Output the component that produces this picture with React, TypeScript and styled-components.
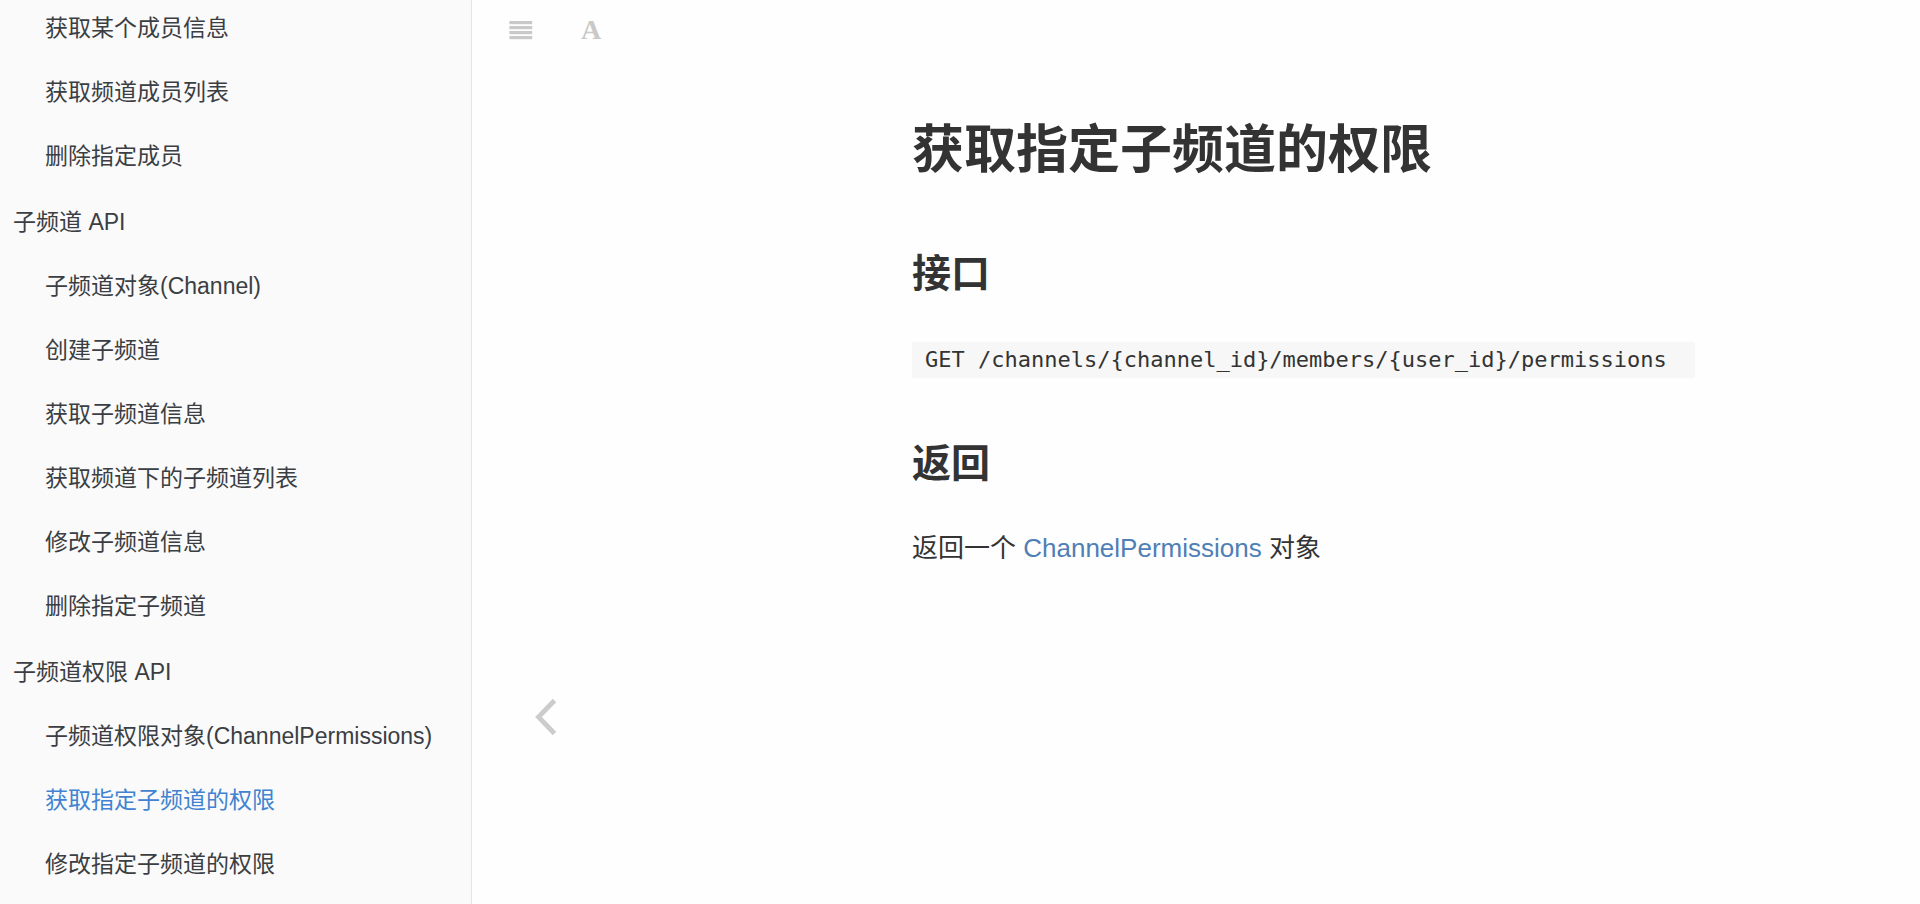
import React from "react";
import styled, { createGlobalStyle } from "styled-components";

const GlobalStyle = createGlobalStyle`
  * { box-sizing: border-box; }
  html, body { margin: 0; padding: 0; background: #fefefe; }
  body {
    font-family: "Liberation Sans", "Noto Sans CJK SC", sans-serif;
    color: #333;
  }
`;

const Book = styled.div`
  display: flex;
  height: 100vh;
  overflow: hidden;
`;

const Sidebar = styled.nav`
  flex: 0 0 472px;
  padding: 12px 13px 0;
  overflow: hidden;
  background: #fafafa;
  border-right: 1px solid #e4e4e4;
`;

const Group = styled.section`
  display: flex;
  flex-direction: column;
  gap: 32px;
  margin-bottom: 34px;
`;

const GroupTitle = styled.h3`
  margin: 0;
  font-size: 23px;
  font-weight: 400;
  line-height: 32px;
  color: #3b3e43;
`;

const Chapters = styled.ul`
  display: flex;
  flex-direction: column;
  gap: 32px;
  margin: 0;
  padding: 0 0 0 32px;
  list-style: none;
`;

const Chapter = styled.li`
  font-size: 23px;
  line-height: 32px;
  white-space: nowrap;
`;

const ChapterLink = styled.a<{ $active: boolean }>`
  display: block;
  text-decoration: none;
  color: ${(p) => (p.$active ? "#4183d0" : "#3b3e43")};
`;

const Main = styled.main`
  flex: 1;
  min-width: 0;
  display: flex;
  flex-direction: column;
  position: relative;
`;

const Toolbar = styled.header`
  display: flex;
  align-items: center;
  gap: 46px;
  height: 60px;
  padding: 0 37px;
`;

const ToolButton = styled.button`
  display: flex;
  align-items: center;
  justify-content: center;
  width: 24px;
  height: 32px;
  padding: 0;
  border: 0;
  background: none;
  color: #c9c9c9;
  font: bold 28px/32px "Liberation Serif", serif;
  cursor: pointer;
`;

const PrevLink = styled.a`
  position: absolute;
  left: 62px;
  top: 697px;
  display: flex;
  color: #ccc;
`;

const Article = styled.article`
  padding: 58px 24px 0 440px;
`;

const Title = styled.h1`
  margin: 0 0 68px;
  font-size: 52px;
  line-height: 64px;
  font-weight: 700;
`;

const Heading = styled.h2`
  margin: 0;
  font-size: 39px;
  line-height: 48px;
  font-weight: 700;
`;

const Endpoint = styled.p`
  display: flex;
  margin: 44px 0 62px;
`;

const Code = styled.code`
  padding: 0 28px 0 13px;
  background: #f7f7f7;
  font: 22px/36px "DejaVu Sans Mono", monospace;
  white-space: nowrap;
`;

const Paragraph = styled.p`
  margin: 40px 0 0;
  font-size: 26px;
  line-height: 40px;
`;

const TextLink = styled.a`
  color: #4f7fb5;
  text-decoration: none;
`;

const groups: { title?: string; items: string[] }[] = [
  { items: ["获取某个成员信息", "获取频道成员列表", "删除指定成员"] },
  {
    title: "子频道 API",
    items: [
      "子频道对象(Channel)",
      "创建子频道",
      "获取子频道信息",
      "获取频道下的子频道列表",
      "修改子频道信息",
      "删除指定子频道",
    ],
  },
  {
    title: "子频道权限 API",
    items: [
      "子频道权限对象(ChannelPermissions)",
      "获取指定子频道的权限",
      "修改指定子频道的权限",
    ],
  },
];

const current = "获取指定子频道的权限";

export default function App() {
  return (
    <>
      <GlobalStyle />
      <Book>
        <Sidebar>
          {groups.map((group, i) => (
            <Group key={i}>
              {group.title && <GroupTitle>{group.title}</GroupTitle>}
              <Chapters>
                {group.items.map((item) => (
                  <Chapter key={item}>
                    <ChapterLink href="#" $active={item === current}>
                      {item}
                    </ChapterLink>
                  </Chapter>
                ))}
              </Chapters>
            </Group>
          ))}
        </Sidebar>
        <Main>
          <Toolbar>
            <ToolButton aria-label="目录">
              <svg width="24" height="20" viewBox="0 0 24 20" fill="currentColor">
                <rect x="0.4" y="1" width="22.8" height="3.2" />
                <rect x="0.4" y="6" width="22.8" height="3.2" />
                <rect x="0.4" y="11" width="22.8" height="3.2" />
                <rect x="0.4" y="16" width="22.8" height="3.2" />
              </svg>
            </ToolButton>
            <ToolButton aria-label="字体设置">A</ToolButton>
          </Toolbar>
          <Article>
            <Title>获取指定子频道的权限</Title>
            <Heading>接口</Heading>
            <Endpoint>
              <Code>GET /channels/&#123;channel_id&#125;/members/&#123;user_id&#125;/permissions</Code>
            </Endpoint>
            <Heading>返回</Heading>
            <Paragraph>
              返回一个 <TextLink href="#">ChannelPermissions</TextLink> 对象
            </Paragraph>
          </Article>
          <PrevLink href="#" aria-label="上一页">
            <svg width="24" height="40" viewBox="0 0 24 40" fill="none" stroke="currentColor" strokeWidth="4.8" strokeLinecap="butt">
              <path d="M20.5 3.5 4.5 20l16 16.5" />
            </svg>
          </PrevLink>
        </Main>
      </Book>
    </>
  );
}
